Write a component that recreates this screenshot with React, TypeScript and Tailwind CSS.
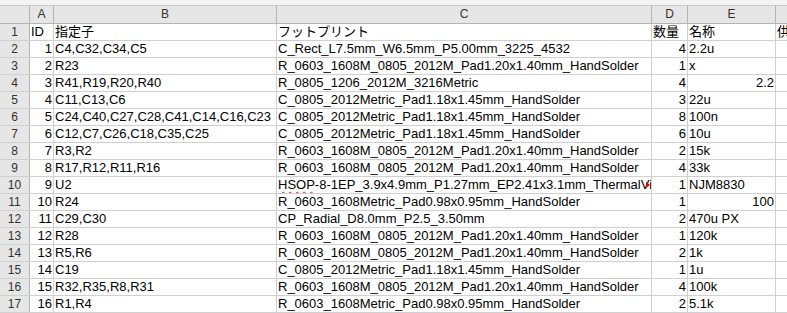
const cols = [
  { key: "A", w: "w-[24px]" },
  { key: "B", w: "w-[223px]" },
  { key: "C", w: "w-[375px]" },
  { key: "D", w: "w-[36px]" },
  { key: "E", w: "w-[88px]" },
];

type Cell = { v: string; right?: boolean };

const R1 = "R_0603_1608M_0805_2012M_Pad1.20x1.40mm_HandSolder";
const C0805 = "C_0805_2012Metric_Pad1.18x1.45mm_HandSolder";
const R0603 = "R_0603_1608Metric_Pad0.98x0.95mm_HandSolder";

const rows: [string, string, string, string, string, boolean?][] = [
  ["1", "C4,C32,C34,C5", "C_Rect_L7.5mm_W6.5mm_P5.00mm_3225_4532", "4", "2.2u"],
  ["2", "R23", R1, "1", "x"],
  ["3", "R41,R19,R20,R40", "R_0805_1206_2012M_3216Metric", "4", "2.2", true],
  ["4", "C11,C13,C6", C0805, "3", "22u"],
  ["5", "C24,C40,C27,C28,C41,C14,C16,C23", C0805, "8", "100n"],
  ["6", "C12,C7,C26,C18,C35,C25", C0805, "6", "10u"],
  ["7", "R3,R2", R1, "2", "15k"],
  ["8", "R17,R12,R11,R16", R1, "4", "33k"],
  ["9", "U2", "HSOP-8-1EP_3.9x4.9mm_P1.27mm_EP2.41x3.1mm_ThermalVias", "1", "NJM8830"],
  ["10", "R24", R0603, "1", "100", true],
  ["11", "C29,C30", "CP_Radial_D8.0mm_P2.5_3.50mm", "2", "470u PX"],
  ["12", "R28", R1, "1", "120k"],
  ["13", "R5,R6", R1, "2", "1k"],
  ["14", "C19", C0805, "1", "1u"],
  ["15", "R32,R35,R8,R31", R1, "4", "100k"],
  ["16", "R1,R4", R0603, "2", "5.1k"],
];

function DataCell({ w, cell, children }: { w: string; cell: Cell; children?: React.ReactNode }) {
  return (
    <div
      className={`${w} shrink-0 h-full border-r border-[#d0d0d0] px-[1px] relative overflow-hidden whitespace-nowrap leading-[16px] ${
        cell.right ? "text-right" : "text-left"
      }`}
    >
      {cell.v}
      {children}
    </div>
  );
}

export default function App() {
  const font = "font-['Liberation_Sans','Noto_Sans_CJK_JP',sans-serif]";
  return (
    <div className={`w-[787px] h-[313px] overflow-hidden bg-white text-[13px] text-black ${font}`}>
      <div className="h-[6px] bg-[#f4f4f4] border-b border-[#c8c8c8]" />
      {/* column header */}
      <div className="flex h-[18px] bg-[#e6e6e6] border-b border-[#b4b4b4] text-[12px] text-[#333] leading-[17px]">
        <div className="w-[30px] shrink-0 border-r border-[#b4b4b4]" />
        {cols.map((c) => (
          <div key={c.key} className={`${c.w} shrink-0 text-center border-r border-[#b4b4b4]`}>
            {c.key}
          </div>
        ))}
        <div className="flex-1" />
      </div>
      {/* header row 1 */}
      <div className="flex h-[17px] border-b border-[#d0d0d0]">
        <div className="w-[30px] shrink-0 bg-[#e6e6e6] border-r border-[#b4b4b4] text-center text-[12px] text-[#333] leading-[16px]">
          1
        </div>
        <DataCell w="w-[24px]" cell={{ v: "ID" }} />
        <DataCell w="w-[223px]" cell={{ v: "指定子" }} />
        <DataCell w="w-[375px]" cell={{ v: "フットプリント" }} />
        <DataCell w="w-[36px]" cell={{ v: "数量" }} />
        <DataCell w="w-[88px]" cell={{ v: "名称" }} />
        <div className="flex-1 px-[1px] leading-[16px] whitespace-nowrap overflow-hidden">供給元</div>
      </div>
      {rows.map((r, i) => {
        const hsop = r[2].startsWith("HSOP");
        return (
          <div key={i} className="flex h-[17px] border-b border-[#d0d0d0]">
            <div className="w-[30px] shrink-0 bg-[#e6e6e6] border-r border-[#b4b4b4] text-center text-[12px] text-[#333] leading-[16px]">
              {i + 2}
            </div>
            <DataCell w="w-[24px]" cell={{ v: r[0], right: true }} />
            <DataCell w="w-[223px]" cell={{ v: r[1] }} />
            <DataCell w="w-[375px]" cell={{ v: "" }}>
              {hsop ? (
                <>
                  <span className="underline decoration-wavy decoration-[#e03030] decoration-1 underline-offset-2">HSOP</span>
                  {r[2].slice(4)}
                </>
              ) : (
                r[2]
              )}
              {hsop && (
                <span className="absolute right-[1px] top-[5px] w-0 h-0 border-y-[3px] border-y-transparent border-l-[4px] border-l-[#e00000]" />
              )}
            </DataCell>
            <DataCell w="w-[36px]" cell={{ v: r[3], right: true }} />
            <DataCell w="w-[88px]" cell={{ v: r[4], right: r[5] }} />
            <div className="flex-1" />
          </div>
        );
      })}
    </div>
  );
}
